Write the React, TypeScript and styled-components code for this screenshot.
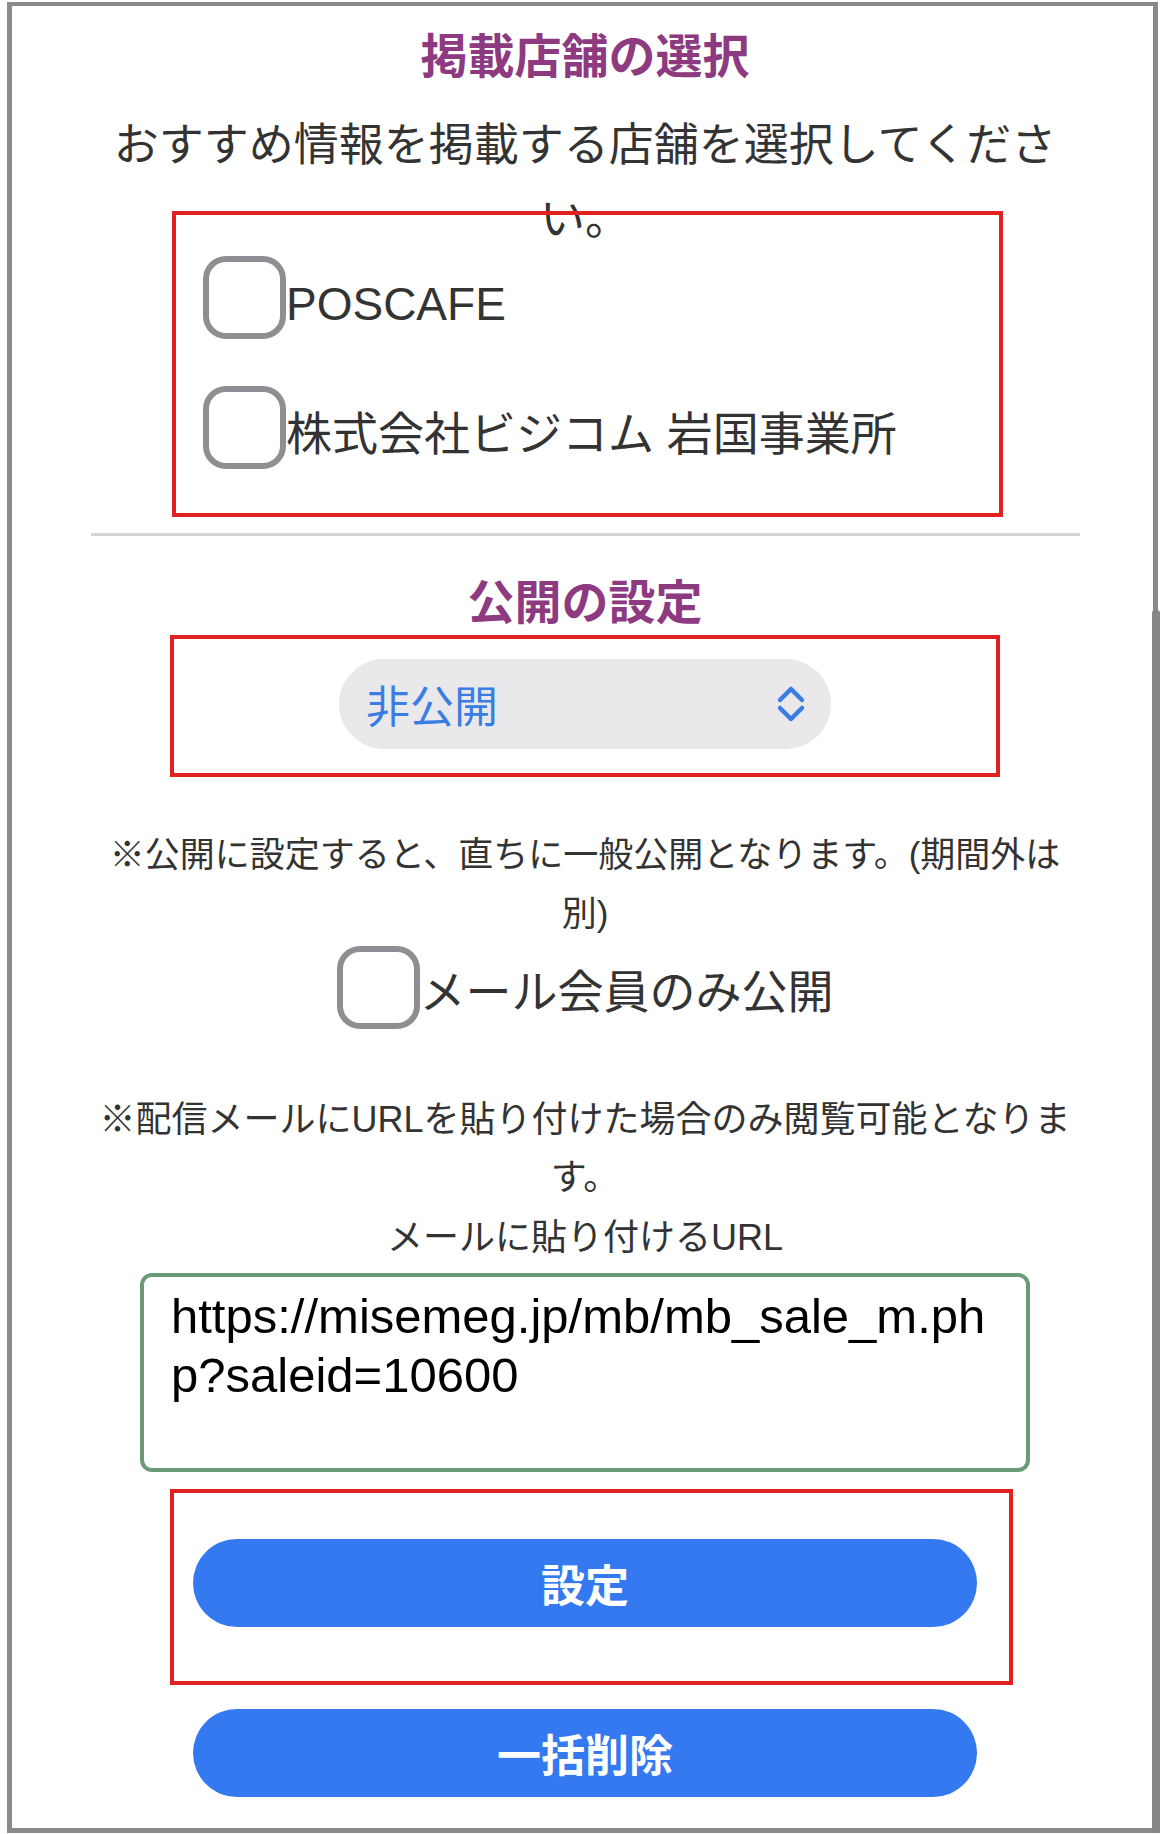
import styled, { createGlobalStyle } from "styled-components";

const GlobalStyle = createGlobalStyle`
    html, body {
        margin: 0;
        padding: 0;
        background: #ffffff;
    }
    body {
        font-family: "Liberation Sans", "Noto Sans CJK JP", sans-serif;
        color: #333333;
    }
`;

const Frame = styled.div`
    position: relative;
    box-sizing: border-box;
    width: 1151px;
    height: 1831px;
    margin: 2px 0 0 7px;
    border: 5px solid #8a8a8a;
    border-top-width: 4px;
    padding: 0 75px 0 80px;
    display: flex;
    flex-direction: column;
    align-items: center;
    background: #ffffff;
`;

const ScrollThumb = styled.div`
    position: absolute;
    top: 604px;
    right: -7px;
    bottom: -5px;
    width: 8px;
    background: #868686;
    border-radius: 3px 3px 0 0;
`;

const SectionTitle = styled.h2<{ $top: number }>`
    margin: ${(props) => props.$top}px 0 0;
    width: 100%;
    text-align: center;
    font-size: 47px;
    line-height: 60px;
    font-weight: 700;
    color: #8e3a80;
`;

const Lead = styled.p`
    margin: 22px 0 0;
    width: 100%;
    text-align: center;
    font-size: 45px;
    line-height: 74px;
`;

const Note = styled.p<{ $top: number; $line: number; $size: number }>`
    margin: ${(props) => props.$top}px 0 0;
    width: 100%;
    text-align: center;
    font-size: ${(props) => props.$size}px;
    line-height: ${(props) => props.$line}px;
`;

const UrlLabel = styled.p`
    margin: 7px 0 0;
    width: 100%;
    text-align: center;
    font-size: 36px;
    line-height: 48px;
`;

// red annotation frames drawn on the screenshot
const Marked = styled.div<{ $top: number; $left: number; $width: number; $height: number }>`
    box-sizing: border-box;
    align-self: flex-start;
    margin: ${(props) => props.$top}px 0 0 ${(props) => props.$left}px;
    width: ${(props) => props.$width}px;
    height: ${(props) => props.$height}px;
    border: 4px solid #e0211f;
`;

const StoreList = styled.div`
    display: flex;
    flex-direction: column;
    gap: 47px;
    padding: 41px 0 0 27px;
`;

const CheckRow = styled.label<{ $top?: number }>`
    display: flex;
    align-items: center;
    margin-top: ${(props) => props.$top ?? 0}px;
`;

const CheckBox = styled.input`
    appearance: none;
    box-sizing: border-box;
    flex-shrink: 0;
    width: 83px;
    height: 83px;
    margin: 0;
    border: 6px solid #8e8e93;
    border-radius: 23px;
    background: #ffffff;
`;

const CheckLabel = styled.span<{ $size: number; $drop: number }>`
    padding-top: ${(props) => props.$drop}px;
    font-size: ${(props) => props.$size}px;
    line-height: 1.2;
    color: #333333;
    white-space: nowrap;
`;

const Divider = styled.hr`
    flex-shrink: 0;
    width: 989px;
    height: 3px;
    margin: 16px 0 0;
    border: none;
    background: #d4d4d4;
`;

const SelectHolder = styled.div`
    display: flex;
    justify-content: center;
    padding-top: 20px;
`;

const SelectBox = styled.div`
    box-sizing: border-box;
    width: 492px;
    height: 90px;
    border-radius: 45px;
    background: #e9e9eb;
    display: flex;
    align-items: center;
    justify-content: space-between;
    padding: 0 24px 0 27px;
    font-size: 44px;
    color: #3a7ee4;
`;

const UrlBox = styled.textarea`
    box-sizing: border-box;
    flex-shrink: 0;
    width: 890px;
    height: 199px;
    margin: 11px 0 0;
    padding: 10px 27px;
    border: 4px solid #6a9a77;
    border-radius: 12px;
    font-family: "Liberation Sans", "Noto Sans CJK JP", sans-serif;
    font-size: 49px;
    line-height: 58.5px;
    color: #000000;
    background: #ffffff;
    resize: none;
    overflow: hidden;
    outline: none;
`;

const ButtonHolder = styled.div`
    padding: 46px 0 0 19px;
`;

const PillButton = styled.button<{ $top?: number }>`
    flex-shrink: 0;
    width: 784px;
    height: 88px;
    margin-top: ${(props) => props.$top ?? 0}px;
    border: none;
    border-radius: 44px;
    background: #3579f0;
    color: #ffffff;
    font-family: "Liberation Sans", "Noto Sans CJK JP", sans-serif;
    font-size: 44px;
    font-weight: 700;
    padding: 0;
`;

const UpDown = () => (
    <svg width="32" height="38" viewBox="0 0 32 38" fill="none">
        <path d="M5 15 L16 4 L27 15" stroke="#3a7ee4" strokeWidth="4.5" strokeLinecap="round" strokeLinejoin="round" />
        <path d="M5 23 L16 34 L27 23" stroke="#3a7ee4" strokeWidth="4.5" strokeLinecap="round" strokeLinejoin="round" />
    </svg>
);

const stores = ["POSCAFE", "株式会社ビジコム 岩国事業所"];

const App = () => {
    return (
        <>
            <GlobalStyle />
            <Frame>
                <SectionTitle $top={21}>掲載店舗の選択</SectionTitle>
                <Lead>おすすめ情報を掲載する店舗を選択してください。</Lead>
                <Marked $top={-46} $left={80} $width={831} $height={306}>
                    <StoreList>
                        {stores.map((name) => (
                            <CheckRow key={name}>
                                <CheckBox type="checkbox" />
                                <CheckLabel $size={46} $drop={14}>{name}</CheckLabel>
                            </CheckRow>
                        ))}
                    </StoreList>
                </Marked>
                <Divider />
                <SectionTitle $top={37}>公開の設定</SectionTitle>
                <Marked $top={2} $left={78} $width={830} $height={142}>
                    <SelectHolder>
                        <SelectBox>
                            <span>非公開</span>
                            <UpDown />
                        </SelectBox>
                    </SelectHolder>
                </Marked>
                <Note $top={48} $line={59} $size={35}>※公開に設定すると、直ちに一般公開となります。(期間外は別)</Note>
                <CheckRow $top={3}>
                    <CheckBox type="checkbox" />
                    <CheckLabel $size={46} $drop={10}>メール会員のみ公開</CheckLabel>
                </CheckRow>
                <Note $top={62} $line={58} $size={36}>※配信メールにURLを貼り付けた場合のみ閲覧可能となります。</Note>
                <UrlLabel>メールに貼り付けるURL</UrlLabel>
                <UrlBox readOnly value="https://misemeg.jp/mb/mb_sale_m.php?saleid=10600" />
                <Marked $top={17} $left={78} $width={843} $height={196}>
                    <ButtonHolder>
                        <PillButton>設定</PillButton>
                    </ButtonHolder>
                </Marked>
                <PillButton $top={24}>一括削除</PillButton>
                <ScrollThumb />
            </Frame>
        </>
    );
};

export default App;
